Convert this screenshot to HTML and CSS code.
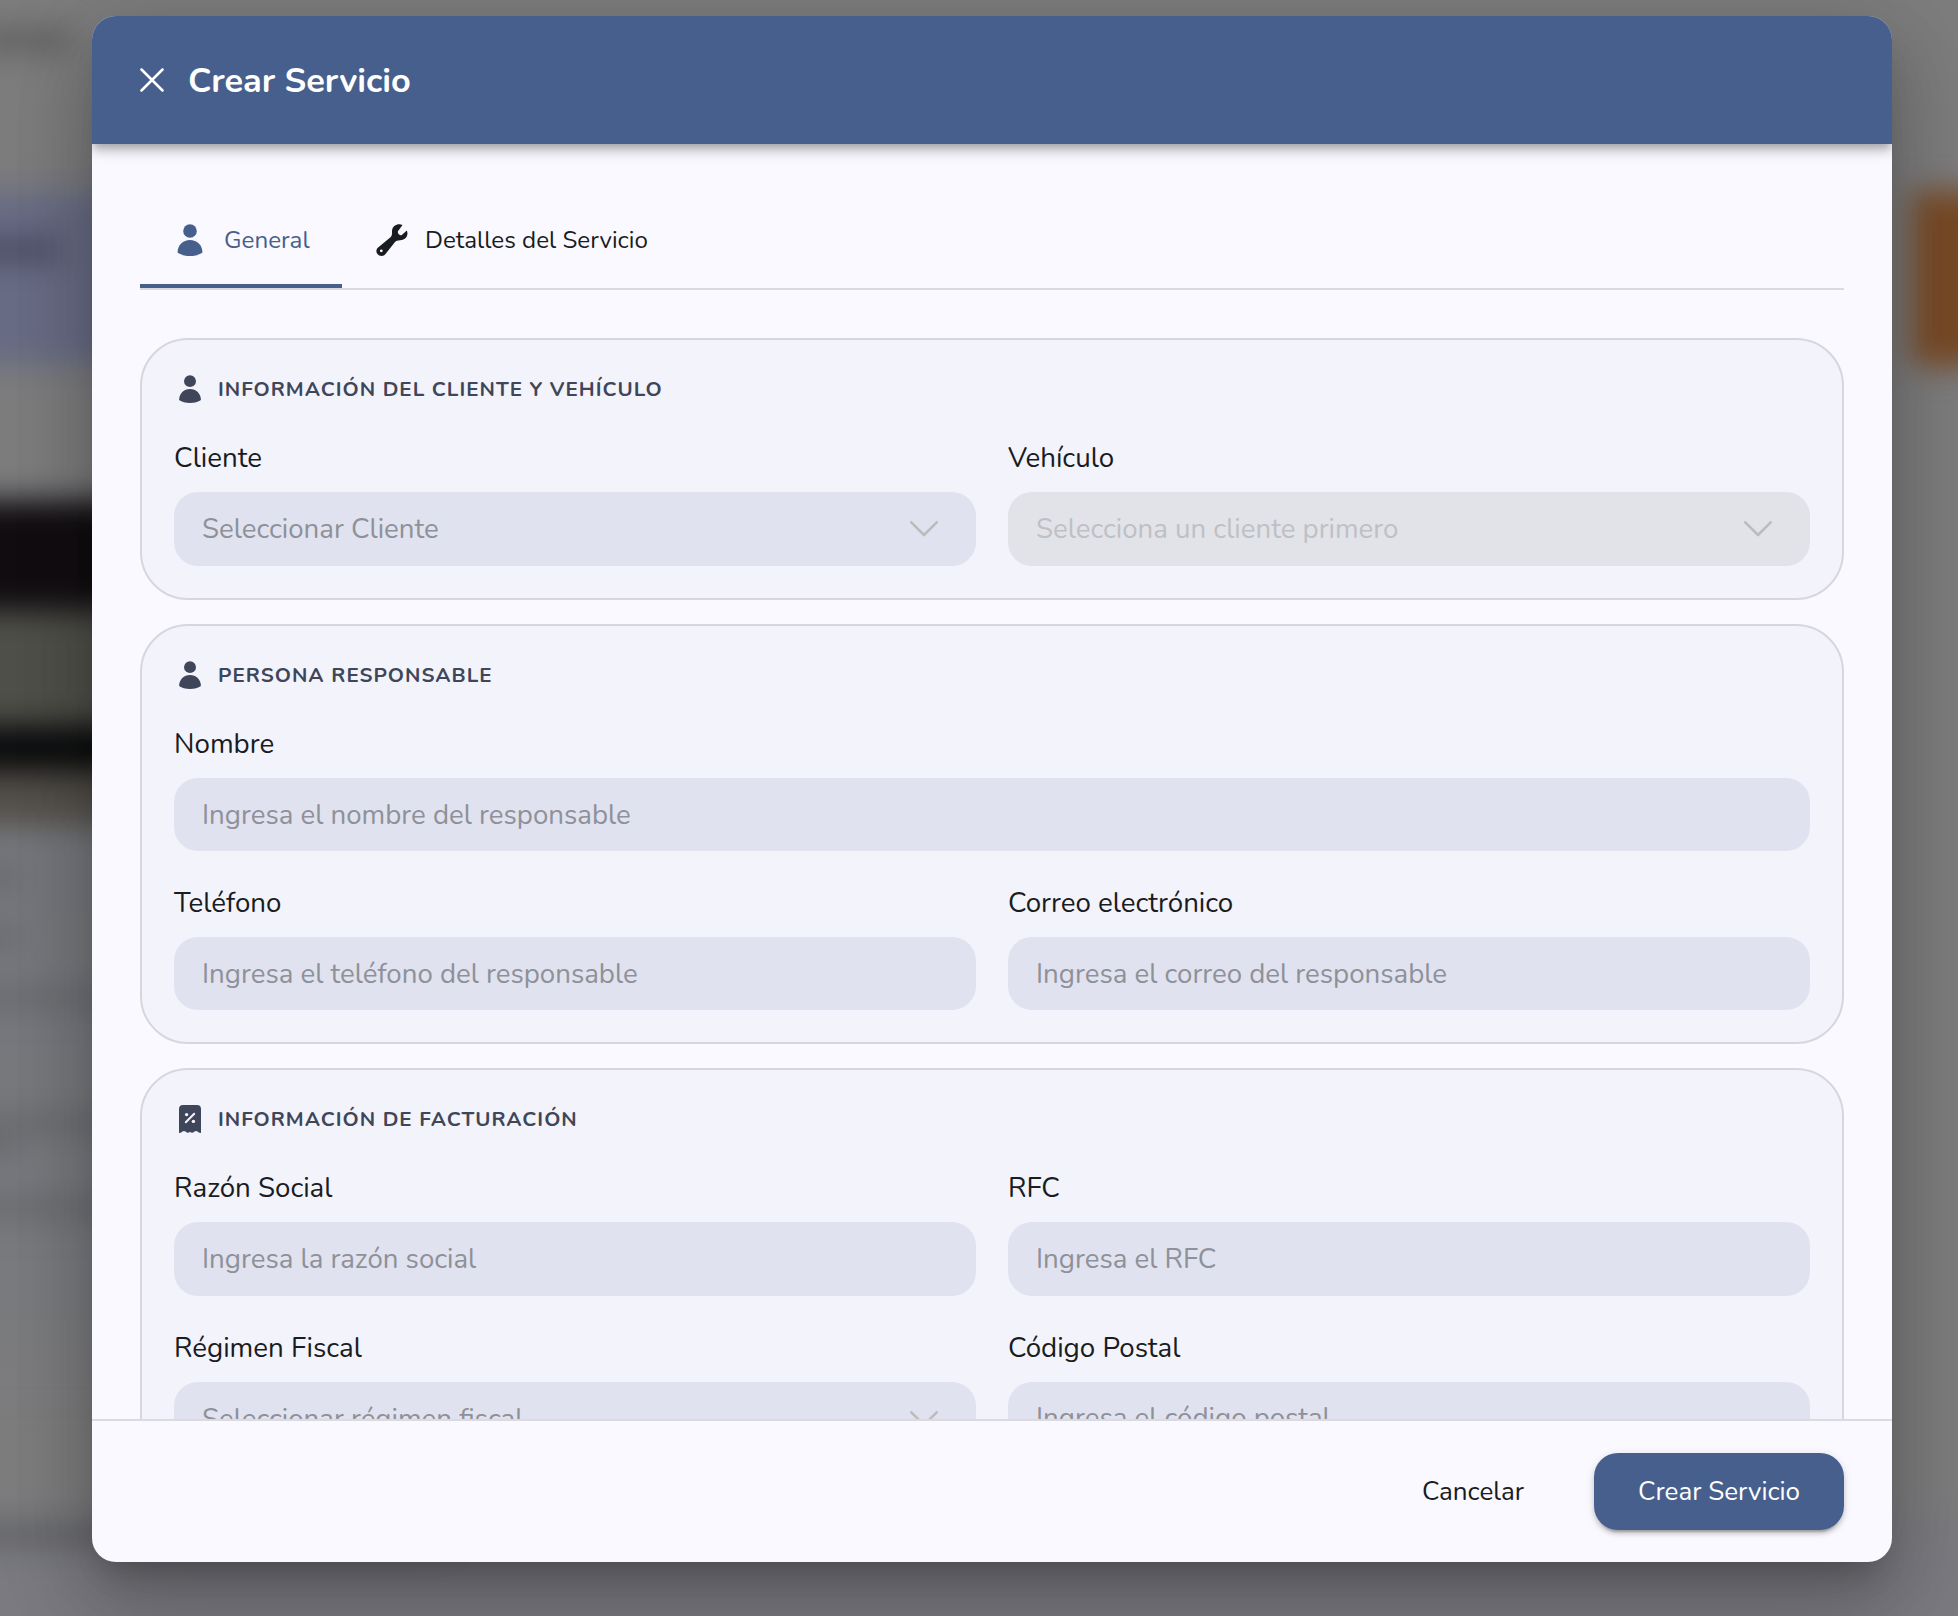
FILE: index.html
```html
<!DOCTYPE html>
<html lang="es">
<head>
    <meta charset="UTF-8">
    <meta name="viewport" content="width=device-width, initial-scale=1.0">
    <title>Crear Servicio</title>
    <link rel="stylesheet" href="styles.css">
</head>
<body>

<svg width="0" height="0" class="sprite">
    <symbol id="icon-user" viewBox="0 0 32 32">
        <ellipse cx="16" cy="7" rx="6.8" ry="6.8"/>
        <path d="M16 16C9 16 3.6 21.200 3.500 28.600C6.500 31 11 32 16 32S25.500 31 28.500 28.600C28.400 21.200 23 16 16 16Z"/>
    </symbol>
    <symbol id="icon-chevron" viewBox="0 0 28 16">
        <path d="M1.300 1.300L14 14L26.700 1.300" fill="none" stroke="currentColor" stroke-width="2.600" stroke-linecap="round" stroke-linejoin="round"/>
    </symbol>
</svg>

<!-- Página de fondo -->
<div class="page">
    <div class="page-left">
        <div class="bg-title"></div>
        <div class="bg-banner"><div class="bg-banner-text"></div></div>
        <div class="bg-photo">
            <div class="bg-photo-dark"></div>
            <div class="bg-photo-olive"></div>
            <div class="bg-photo-black"></div>
            <div class="bg-photo-brown"></div>
        </div>
        <div class="bg-lines">
            <div class="bg-line short"></div>
            <div class="bg-line short"></div>
            <div class="bg-line last"></div>
            <div class="bg-line near"></div>
            <div class="bg-line short"></div>
            <div class="bg-line"></div>
        </div>
        <div class="bg-foot"></div>
    </div>
    <div class="page-right">
        <div class="bg-orange"></div>
    </div>
</div>

<div class="overlay">
    <div class="dialog">
        <header class="dialog-header">
            <svg class="close" viewBox="0 0 24 24"><path d="M1.500 1.500L22.500 22.500M22.500 1.500L1.500 22.500" fill="none" stroke="currentColor" stroke-width="2.500" stroke-linecap="round"/></svg>
            <h1>Crear Servicio</h1>
        </header>

        <div class="dialog-body">
            <nav class="tabs">
                <a class="tab active">
                    <svg class="tab-icon"><use href="#icon-user"/></svg>
                    <span>General</span>
                </a>
                <a class="tab">
                    <svg class="tab-icon" viewBox="0 0 32 32"><path fill-rule="evenodd" d="M30.800 6.500L25.500 11.200C24 11.800 21.600 10 21.800 7.500L26.500 1C22.500-.800 15.500 1 16 8.500C16 11 15.800 12 14.500 13.300L1.500 24C-1.500 28 2 32 5.500 32C7.500 32 8.600 31 9.500 30L19 18C20.200 16.700 21.500 16.300 24 16.200C31 15.800 32.500 10.500 30.800 6.500ZM5.300 25.400A1.400 1.400 0 1 1 5.300 28.200A1.400 1.400 0 1 1 5.300 25.400Z"/></svg>
                    <span>Detalles del Servicio</span>
                </a>
            </nav>

            <section class="card">
                <h2><svg class="card-icon"><use href="#icon-user"/></svg><span>Información del cliente y vehículo</span></h2>
                <div class="grid">
                    <div class="field">
                        <label>Cliente</label>
                        <div class="input select"><span>Seleccionar Cliente</span><svg class="chevron"><use href="#icon-chevron"/></svg></div>
                    </div>
                    <div class="field">
                        <label>Vehículo</label>
                        <div class="input select disabled"><span>Selecciona un cliente primero</span><svg class="chevron"><use href="#icon-chevron"/></svg></div>
                    </div>
                </div>
            </section>

            <section class="card">
                <h2><svg class="card-icon"><use href="#icon-user"/></svg><span>Persona responsable</span></h2>
                <div class="grid">
                    <div class="field full">
                        <label>Nombre</label>
                        <div class="input"><span>Ingresa el nombre del responsable</span></div>
                    </div>
                    <div class="field">
                        <label>Teléfono</label>
                        <div class="input"><span>Ingresa el teléfono del responsable</span></div>
                    </div>
                    <div class="field">
                        <label>Correo electrónico</label>
                        <div class="input"><span>Ingresa el correo del responsable</span></div>
                    </div>
                </div>
            </section>

            <section class="card">
                <h2>
                    <svg class="card-icon" viewBox="0 0 28 28">
                        <path d="M3 4Q3 0 7 0H21Q25 0 25 4V28Q23.200 28 21.500 26.500Q20 25.400 18.500 26.500Q16 28.800 14 26.800Q12 28.800 9.500 26.500Q8 25.400 6.500 26.500Q4.800 28 3 28Z"/>
                        <path d="M9.800 17.200L18.200 8.800" stroke="#f3f3fc" stroke-width="2" stroke-linecap="round"/>
                        <circle cx="10.600" cy="9.600" r="1.700" fill="#f3f3fc"/>
                        <circle cx="17.400" cy="16.400" r="1.700" fill="#f3f3fc"/>
                    </svg>
                    <span>Información de facturación</span>
                </h2>
                <div class="grid">
                    <div class="field">
                        <label>Razón Social</label>
                        <div class="input"><span>Ingresa la razón social</span></div>
                    </div>
                    <div class="field">
                        <label>RFC</label>
                        <div class="input"><span>Ingresa el RFC</span></div>
                    </div>
                    <div class="field">
                        <label>Régimen Fiscal</label>
                        <div class="input select"><span>Seleccionar régimen fiscal</span><svg class="chevron"><use href="#icon-chevron"/></svg></div>
                    </div>
                    <div class="field">
                        <label>Código Postal</label>
                        <div class="input"><span>Ingresa el código postal</span></div>
                    </div>
                </div>
            </section>
        </div>

        <footer class="dialog-footer">
            <button class="btn-cancel">Cancelar</button>
            <button class="btn-primary">Crear Servicio</button>
        </footer>
    </div>
</div>

</body>
</html>
```
FILE: styles.css
```css
* {
    box-sizing: border-box;
}
body {
    margin: 0;
    height: 1616px;
    overflow: hidden;
    font-family: Nunito, Lato, sans-serif;
    color: #191c20;
    background: linear-gradient(#7d7d7e 92%, #7a7a80 97%);
}
.sprite {
    position: absolute;
}
svg {
    display: block;
    fill: currentColor;
    flex-shrink: 0;
}

/* fondo desenfocado */
.page {
    display: flex;
    justify-content: space-between;
    height: 1616px;
    filter: blur(15px);
}
.page-left {
    width: 500px;
    margin-left: -60px;
    padding-top: 30px;
}
.bg-title {
    width: 130px;
    height: 20px;
    background: #5c5c5d;
}
.bg-banner {
    height: 172px;
    margin-top: 142px;
    padding-top: 48px;
    background: #686c85;
}
.bg-banner-text {
    width: 120px;
    height: 20px;
    background: #44475c;
}
.bg-photo {
    margin-top: 136px;
}
.bg-photo-dark {
    height: 110px;
    background: #110d10;
}
.bg-photo-olive {
    height: 116px;
    background: #50504a;
}
.bg-photo-black {
    height: 44px;
    background: #08090b;
}
.bg-photo-brown {
    height: 54px;
    background: #534f49;
}
.bg-lines {
    height: 570px;
    padding-top: 47px;
    background: linear-gradient(#75777c, #787a7e 70%, #7d7d7e);
}
.bg-line {
    height: 14px;
    margin-bottom: 51px;
    background: #636468;
}
.bg-line.short {
    width: 80px;
    margin-bottom: 46px;
}
.bg-line.last {
    margin-bottom: 111px;
}
.bg-line.near {
    margin-bottom: 11px;
}
.bg-foot {
    height: 18px;
    margin-top: 132px;
    background: #5c5d61;
}
.page-right {
    width: 46px;
    padding-top: 191px;
}
.bg-orange {
    width: 100px;
    height: 175px;
    background: #784a25;
}

/* diálogo */
.overlay {
    position: absolute;
    inset: 0;
    padding: 16px 66px 54px 92px;
}
.dialog {
    display: flex;
    flex-direction: column;
    height: 1546px;
    border-radius: 24px;
    overflow: hidden;
    background: #faf9ff;
    box-shadow: 0 22px 30px -14px rgba(0,0,0,0.2), 0 48px 76px 6px rgba(0,0,0,0.14), 0 18px 92px 16px rgba(0,0,0,0.12);
}
.dialog-header {
    display: flex;
    align-items: center;
    gap: 24px;
    height: 128px;
    flex-shrink: 0;
    padding: 0 48px;
    color: #fff;
    background: #475f8d;
    box-shadow: 0 4px 8px -2px rgba(0,0,0,0.2), 0 8px 10px rgba(0,0,0,0.14), 0 2px 20px rgba(0,0,0,0.12);
    z-index: 1;
}
.close {
    width: 24px;
    height: 24px;
}
h1 {
    margin: 0;
    font-size: 34.3px;
    font-weight: 700;
}
.dialog-body {
    flex: 1;
    min-height: 0;
    overflow: hidden;
    padding: 48px 48px 0;
}
.tabs {
    display: flex;
    height: 98px;
    margin-bottom: 48px;
    border-bottom: 2px solid #dadae0;
}
.tab {
    display: flex;
    align-items: center;
    gap: 17px;
    padding: 4px 32px 0 34px;
    font-size: 24.2px;
    border-bottom: 4px solid transparent;
}
.tab.active {
    gap: 18px;
    width: 202px;
    color: #475f8d;
    border-bottom-color: #475f8d;
}
.tab-icon {
    width: 32px;
    height: 32px;
}
.card {
    margin-bottom: 24px;
    padding: 32px;
    border: 2px solid #d6d6dc;
    border-radius: 48px;
    background: #f3f3fc;
}
h2 {
    display: flex;
    align-items: center;
    gap: 14px;
    height: 34px;
    margin: 0 0 24px;
    padding-left: 2px;
    font-size: 20.6px;
    font-weight: 700;
    letter-spacing: 1px;
    text-transform: uppercase;
    color: #404659;
}
.card-icon {
    width: 28px;
    height: 28px;
}
.grid {
    display: grid;
    grid-template-columns: 1fr 1fr;
    gap: 24px 32px;
}
.full {
    grid-column: 1 / -1;
}
label {
    display: block;
    height: 62px;
    padding-top: 9px;
    font-size: 27.7px;
    line-height: 38px;
}
.input {
    display: flex;
    align-items: center;
    justify-content: space-between;
    height: 73.2px;
    padding: 0 38px 0 28px;
    border-radius: 24px;
    font-size: 27.65px;
    color: #8e9199;
    background: #e1e2ef;
}
.input.select {
    height: 74px;
}
.input.disabled {
    color: #bfc0c4;
    background: #e2e3e8;
}
.chevron {
    width: 28px;
    height: 16px;
    color: #bcbcbd;
}
.dialog-footer {
    display: flex;
    align-items: center;
    justify-content: flex-end;
    gap: 70px;
    height: 143px;
    flex-shrink: 0;
    padding: 0 48px;
    border-top: 2px solid #dadae0;
}
button {
    padding: 0;
    border: none;
    font-family: inherit;
    font-size: 26px;
    color: #191c20;
    background: none;
}
.btn-primary {
    width: 250px;
    height: 77px;
    border-radius: 24px;
    color: #fff;
    background: #475f8d;
    box-shadow: 0 6px 2px -4px rgba(0,0,0,0.2), 0 4px 4px rgba(0,0,0,0.14), 0 2px 10px rgba(0,0,0,0.12);
}
```
